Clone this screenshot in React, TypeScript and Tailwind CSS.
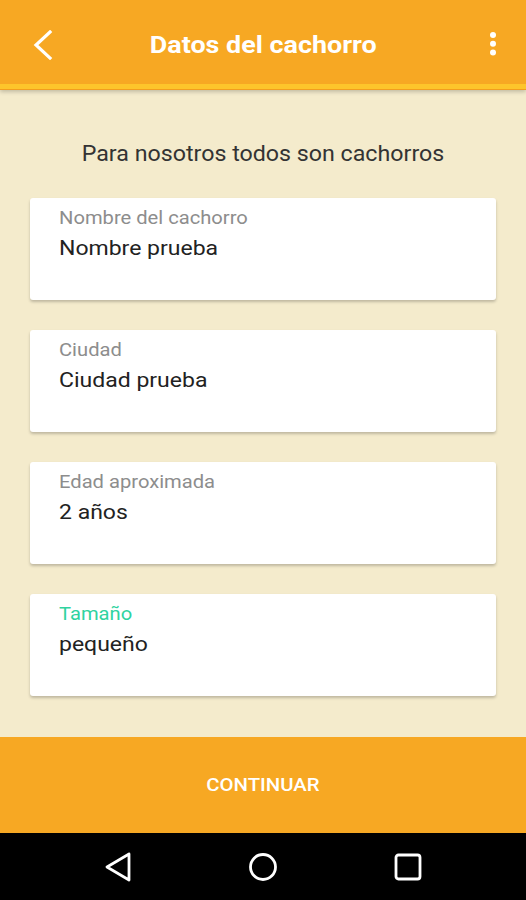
const fields = [
  { label: "Nombre del cachorro", value: "Nombre prueba", active: false },
  { label: "Ciudad", value: "Ciudad prueba", active: false },
  { label: "Edad aproximada", value: "2 años", active: false },
  { label: "Tamaño", value: "pequeño", active: true },
];

function Field({ label, value, active }: { label: string; value: string; active: boolean }) {
  return (
    <div className="h-[102px] rounded-[3px] bg-white px-[29px] pt-[10px] shadow-[0_2px_3px_rgba(0,0,0,0.22)]">
      <div
        className={`origin-left scale-x-[1.12] text-[18px] leading-[20px] ${active ? "text-[#2fd3a0]" : "text-[#8d8d8d]"}`}
      >
        {label}
      </div>
      <div className="mt-[8px] origin-left scale-x-[1.15] text-[20px] leading-[24px] text-[#222]">{value}</div>
    </div>
  );
}

export default function App() {
  return (
    <div className="flex h-[900px] w-[526px] flex-col overflow-hidden bg-[#f4ebcc] font-['Roboto',sans-serif]">
      <header className="relative z-10 shadow-[0_2px_4px_rgba(0,0,0,0.2)]">
        <div className="relative flex h-[84px] items-center justify-center bg-[#f7a823] pt-[6px]">
          <button type="button" className="absolute left-[26px] top-[29px] grid size-[32px] place-items-center">
            <svg width="22" height="30" viewBox="0 0 22 30" fill="none">
              <path d="M19 2 L5 15 L19 28" stroke="#fff" strokeWidth="3.2" strokeLinecap="square" />
            </svg>
          </button>
          <h1 className="scale-x-[1.12] text-[24px] font-bold text-white">Datos del cachorro</h1>
          <button type="button" className="absolute left-[488px] top-[32px]">
            <svg width="10" height="24" viewBox="0 0 10 24" fill="#fff">
              <circle cx="5" cy="3" r="3" />
              <circle cx="5" cy="11.8" r="3" />
              <circle cx="5" cy="20.6" r="3" />
            </svg>
          </button>
        </div>
        <div className="h-[5px] bg-[#fdc52b]" />
        <div className="h-[1px] bg-[#f39d1e]" />
      </header>

      <main className="flex-1 px-[30px] pt-[52px]">
        <p className="scale-x-[1.055] text-center text-[22px] leading-[24px] text-[#333]">
          Para nosotros todos son cachorros
        </p>
        <div className="mt-[32px] flex flex-col gap-[30px]">
          {fields.map((f) => (
            <Field key={f.label} {...f} />
          ))}
        </div>
      </main>

      <button type="button" className="h-[96px] bg-[#f7a823] text-white">
        <span className="inline-block scale-x-[1.07] text-[19px] font-medium">CONTINUAR</span>
      </button>

      <nav className="flex h-[67px] items-center justify-center gap-[85px] bg-black">
        <span className="grid w-[60px] place-items-center">
          <svg width="28" height="32" viewBox="0 0 28 32" fill="none">
            <path d="M25 3 L3 16 L25 29 Z" stroke="#fff" strokeWidth="2.8" strokeLinejoin="round" />
          </svg>
        </span>
        <span className="grid w-[60px] place-items-center">
          <svg width="30" height="30" viewBox="0 0 30 30" fill="none">
            <circle cx="15" cy="15" r="12.5" stroke="#fff" strokeWidth="2.8" />
          </svg>
        </span>
        <span className="grid w-[60px] place-items-center">
          <svg width="28" height="28" viewBox="0 0 28 28" fill="none">
            <rect x="2" y="2" width="24" height="24" rx="2.5" stroke="#fff" strokeWidth="2.8" />
          </svg>
        </span>
      </nav>
    </div>
  );
}
